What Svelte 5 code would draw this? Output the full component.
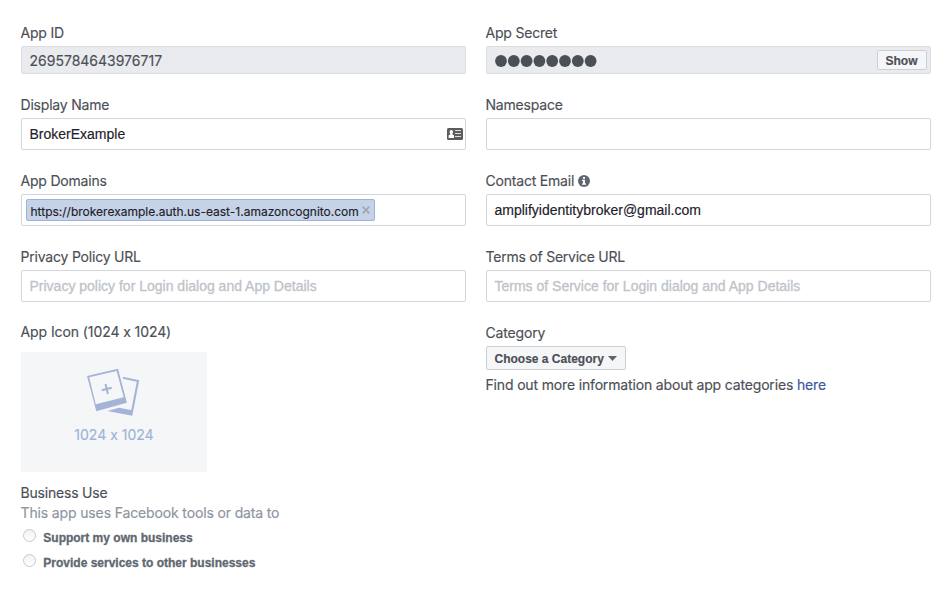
<script>
  const domain = 'https://brokerexample.auth.us-east-1.amazoncognito.com';
  const uses = ['Support my own business', 'Provide services to other businesses'];
</script>

<main>
  <section class="column">
    <div class="field">
      <div class="label">App ID</div>
      <div class="box locked"><span class="appid">2695784643976717</span></div>
    </div>
    <div class="field">
      <div class="label">Display Name</div>
      <div class="box">
        <span class="value">BrokerExample</span>
        <svg class="contact" width="16" height="12" viewBox="0 0 16 12">
          <rect width="16" height="12" rx="1.500" fill="#5c5c5c" />
          <path d="M4.300 2c1.100 0 1.700.8 1.700 1.900 0 .8-.3 1.400-.7 1.800v.7l1.700.9V10H1.600V7.300l1.700-.9v-.7c-.4-.4-.7-1-.7-1.800C2.600 2.800 3.200 2 4.300 2z" fill="#fff" />
          <path d="M8 2.500h6M8 5.500h6M8 8.500h6" stroke="#ddd" stroke-width="1.200" />
        </svg>
      </div>
    </div>
    <div class="field">
      <div class="label">App Domains</div>
      <div class="box tags">
        <span class="tag">
          <span class="domain">{domain}</span>
          <svg width="8" height="8" viewBox="0 0 8 8"><path d="M.7.7l6.600 6.600M7.300.7L.7 7.300" stroke="#a1a9b5" stroke-width="1.900" /></svg>
        </span>
      </div>
    </div>
    <div class="field">
      <div class="label">Privacy Policy URL</div>
      <div class="box"><span class="placeholder">Privacy policy for Login dialog and App Details</span></div>
    </div>
    <div class="label icon-label">App Icon (1024 x 1024)</div>
    <div class="upload">
      <svg width="54" height="50" viewBox="0 0 54 50">
        <path d="M35.700 8.700L52.200 12.200 45.300 47.700 20.300 42.900 32 39.700 44.300 42 49.800 13.700 36.100 10.700z" fill="#a5b3d6" />
        <path fill-rule="evenodd" d="M0 8L31 .7 39.900 34.700 9.300 43.300zM2.200 9.300L8.700 36.300 36.700 29.300 29.600 2.900z" fill="#a5b3d6" />
        <path d="M18.500 16l2.400 10M14.700 22.300l10-2.600" stroke="#a5b3d6" stroke-width="2" />
      </svg>
      <span>1024 x 1024</span>
    </div>
    <div class="label business">Business Use</div>
    <div class="hint">This app uses Facebook tools or data to</div>
    {#each uses as use}
      <div class="option"><i></i><span>{use}</span></div>
    {/each}
  </section>

  <section class="column">
    <div class="field">
      <div class="label">App Secret</div>
      <div class="box locked secret">
        <svg width="102" height="12" viewBox="0 0 102 12">
          {#each Array(8) as _, i}
            <circle cx={6 + i * 12.8} cy="6" r="5.900" fill="#4b4f56" />
          {/each}
        </svg>
        <button class="show">Show</button>
      </div>
    </div>
    <div class="field">
      <div class="label">Namespace</div>
      <div class="box"></div>
    </div>
    <div class="field">
      <div class="label with-info">
        <span>Contact Email</span>
        <svg width="12" height="12" viewBox="0 0 12 12">
          <circle cx="6" cy="6" r="6" fill="#606670" />
          <path d="M5 2h2v1.800H5zM4 4.800h3v3.700h1v1.200H4V8.500h1V6H4z" fill="#fff" />
        </svg>
      </div>
      <div class="box"><span class="value">amplifyidentitybroker@gmail.com</span></div>
    </div>
    <div class="field">
      <div class="label tos">Terms of Service URL</div>
      <div class="box"><span class="placeholder">Terms of Service for Login dialog and App Details</span></div>
    </div>
    <div class="label">Category</div>
    <button class="choose">
      <span>Choose a Category</span>
      <svg width="9" height="5" viewBox="0 0 9 5"><path d="M0 0h9L4.500 5z" fill="#606670" /></svg>
    </button>
    <div class="more">Find out more information about app categories <a href="#categories">here</a></div>
  </section>
</main>

<style>
  :global(body) { background: #fff; }
  main {
    box-sizing: border-box;
    width: 951px;
    height: 597px;
    padding: 23px 20px 0 21px;
    display: grid;
    grid-template-columns: 445px 445px;
    column-gap: 20px;
    overflow: hidden;
    font: 14px/20px Inter, sans-serif;
    font-feature-settings: "calt" 0;
    letter-spacing: -0.16px;
    -webkit-text-stroke: 0.15px currentColor;
    color: #4b4f56;
    white-space: nowrap;
  }
  .column { display: flex; flex-direction: column; align-items: flex-start; }
  .field { width: 445px; margin-bottom: 21px; }
  .label { height: 20px; text-indent: -0.5px; }
  .field .label { letter-spacing: -0.2px; }
  .field .tos { letter-spacing: -0.23px; }
  .box {
    box-sizing: border-box;
    height: 32px;
    margin-top: 3px;
    padding: 0 8px 0 7.5px;
    border: 1px solid #d3d6db;
    border-radius: 2px;
    display: flex;
    align-items: center;
    justify-content: space-between;
    background: #fff;
  }
  .locked { height: 28px; background: #e9ebee; border-color: #dadde1; }
  .appid { letter-spacing: 0; padding-top: 2px; }
  .value, .placeholder { font-family: "Liberation Sans", Arial, sans-serif; letter-spacing: 0; }
  .value { color: #1d2129; }
  .placeholder { color: #bec3c9; -webkit-text-stroke-width: 0.3px; }
  .contact { margin-right: -6px; }
  .tags { padding: 0 4px; }
  .tag {
    box-sizing: border-box;
    width: 349px;
    height: 22px;
    padding: 3px 4px 0 3.5px;
    border: 1px solid #9cb4d8;
    border-radius: 2px;
    background: #c5d2e7;
    display: flex;
    align-items: center;
    justify-content: space-between;
    font-size: 12px;
    letter-spacing: 0;
    color: #1d2129;
  }
  .tag svg { margin-top: -4px; }
  .secret { padding-right: 3px; padding-left: 8px; }
  .secret svg { margin-top: 1px; }
  button {
    box-sizing: border-box;
    margin: 0;
    border: 1px solid #ccd0d5;
    border-radius: 2px;
    background: #f5f6f7;
    color: #4b4f56;
    font: bold 12px/18px "Liberation Sans", Arial, sans-serif;
    letter-spacing: 0;
  }
  .show { width: 50px; height: 20px; padding: 2px 1px 0 0; line-height: 16px; }
  .choose {
    width: 140px;
    height: 24px;
    margin-top: 3px;
    padding: 0 8px 0 7.5px;
    display: flex;
    align-items: center;
    justify-content: space-between;
  }
  .choose span { padding-top: 2px; }
  .more { margin-top: 5px; text-indent: -0.5px; }
  a { color: #385898; text-decoration: none; }
  .with-info { display: flex; align-items: center; gap: 4px; }
  .icon-label { margin-top: -1px; letter-spacing: -0.09px; }
  .upload {
    box-sizing: border-box;
    width: 186px;
    height: 120px;
    margin-top: 10px;
    padding-top: 16px;
    background: #f5f6f7;
    color: #9cb4d8;
    display: flex;
    flex-direction: column;
    align-items: center;
  }
  .upload span { margin-top: 7px; letter-spacing: 0; }
  .business { margin-top: 11px; letter-spacing: -0.2px; }
  .hint { color: #8d949e; margin-bottom: 5px; text-indent: -0.5px; letter-spacing: -0.14px; }
  .option {
    height: 25px;
    padding-left: 2px;
    display: flex;
    gap: 7.3px;
    font: bold 12px/20px "Liberation Sans", Arial, sans-serif;
    letter-spacing: 0;
    -webkit-text-stroke-width: 0.3px;
    color: #606770;
  }
  i {
    box-sizing: border-box;
    width: 13px;
    height: 13px;
    margin-top: 1px;
    border: 1px solid #c8c8c8;
    border-radius: 50%;
    background: linear-gradient(#f2f2f2, #fff);
  }
</style>
